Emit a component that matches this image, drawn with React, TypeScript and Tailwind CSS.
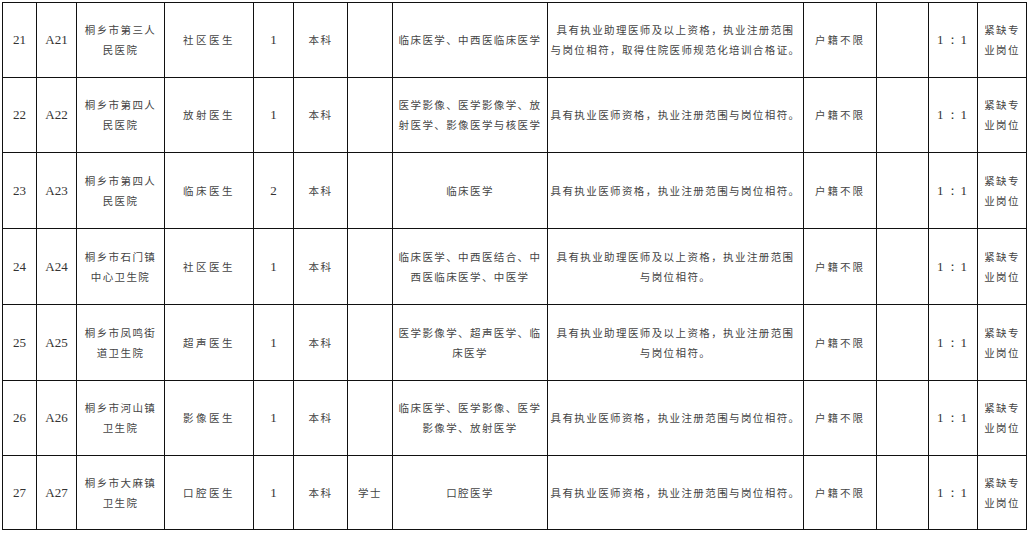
type Row = {
  no: string;
  code: string;
  unit: string[];
  post: string;
  count: string;
  edu: string;
  degree: string;
  major: string[];
  req: string[];
  h: string;
};

const rows: Row[] = [
  {
    no: "21",
    code: "A21",
    unit: ["桐乡市第三人", "民医院"],
    post: "社区医生",
    count: "1",
    edu: "本科",
    degree: "",
    major: ["临床医学、中西医临床医学"],
    req: ["具有执业助理医师及以上资格，执业注册范围", "与岗位相符，取得住院医师规范化培训合格证。"],
    h: "h-[75px]",
  },
  {
    no: "22",
    code: "A22",
    unit: ["桐乡市第四人", "民医院"],
    post: "放射医生",
    count: "1",
    edu: "本科",
    degree: "",
    major: ["医学影像、医学影像学、放", "射医学、影像医学与核医学"],
    req: ["具有执业医师资格，执业注册范围与岗位相符。"],
    h: "h-[75px]",
  },
  {
    no: "23",
    code: "A23",
    unit: ["桐乡市第四人", "民医院"],
    post: "临床医生",
    count: "2",
    edu: "本科",
    degree: "",
    major: ["临床医学"],
    req: ["具有执业医师资格，执业注册范围与岗位相符。"],
    h: "h-[76px]",
  },
  {
    no: "24",
    code: "A24",
    unit: ["桐乡市石门镇", "中心卫生院"],
    post: "社区医生",
    count: "1",
    edu: "本科",
    degree: "",
    major: ["临床医学、中西医结合、中", "西医临床医学、中医学"],
    req: ["具有执业助理医师及以上资格，执业注册范围", "与岗位相符。"],
    h: "h-[76px]",
  },
  {
    no: "25",
    code: "A25",
    unit: ["桐乡市凤鸣街", "道卫生院"],
    post: "超声医生",
    count: "1",
    edu: "本科",
    degree: "",
    major: ["医学影像学、超声医学、临", "床医学"],
    req: ["具有执业助理医师及以上资格，执业注册范围", "与岗位相符。"],
    h: "h-[76px]",
  },
  {
    no: "26",
    code: "A26",
    unit: ["桐乡市河山镇", "卫生院"],
    post: "影像医生",
    count: "1",
    edu: "本科",
    degree: "",
    major: ["临床医学、医学影像、医学", "影像学、放射医学"],
    req: ["具有执业医师资格，执业注册范围与岗位相符。"],
    h: "h-[75px]",
  },
  {
    no: "27",
    code: "A27",
    unit: ["桐乡市大麻镇", "卫生院"],
    post: "口腔医生",
    count: "1",
    edu: "本科",
    degree: "学士",
    major: ["口腔医学"],
    req: ["具有执业医师资格，执业注册范围与岗位相符。"],
    h: "h-[74px]",
  },
];

const cell = "border-[1.5px] border-[#111] text-center align-middle p-0";
const cjk = "font-['Noto_Sans_CJK_SC',sans-serif] text-[10.5px] tracking-[1.4px] leading-[20px] text-[#444]";
const num = "font-['Liberation_Serif',serif] text-[13px] text-[#333]";

function Lines({ lines }: { lines: string[] }) {
  return (
    <>
      {lines.map((l, i) => (
        <div key={i} className="whitespace-nowrap">
          {l}
        </div>
      ))}
    </>
  );
}

export default function App() {
  return (
    <div className="w-[1032px] h-[534px] bg-white overflow-hidden pt-[2px] pl-[2px]">
      <table className="table-fixed border-collapse w-[1024px]">
        <colgroup>
          <col className="w-[34px]" />
          <col className="w-[40px]" />
          <col className="w-[88px]" />
          <col className="w-[89px]" />
          <col className="w-[40px]" />
          <col className="w-[54px]" />
          <col className="w-[45px]" />
          <col className="w-[155px]" />
          <col className="w-[256px]" />
          <col className="w-[73px]" />
          <col className="w-[52px]" />
          <col className="w-[49px]" />
          <col className="w-[49px]" />
        </colgroup>
        <tbody>
          {rows.map((r) => (
            <tr key={r.no} className={r.h}>
              <td className={`${cell} ${num}`}>{r.no}</td>
              <td className={`${cell} ${num} text-[12px]`}>{r.code}</td>
              <td className={`${cell} ${cjk}`}>
                <Lines lines={r.unit} />
              </td>
              <td className={`${cell} ${cjk} tracking-[2.5px]`}>{r.post}</td>
              <td className={`${cell} ${num}`}>{r.count}</td>
              <td className={`${cell} ${cjk}`}>{r.edu}</td>
              <td className={`${cell} ${cjk}`}>{r.degree}</td>
              <td className={`${cell} ${cjk}`}>
                <Lines lines={r.major} />
              </td>
              <td className={`${cell} ${cjk}`}>
                <Lines lines={r.req} />
              </td>
              <td className={`${cell} ${cjk} tracking-[2px]`}>户籍不限</td>
              <td className={`${cell}`}></td>
              <td className={`${cell} ${num} text-[12px] tracking-[2px]`}>1：1</td>
              <td className={`${cell} ${cjk}`}>
                <Lines lines={["紧缺专", "业岗位"]} />
              </td>
            </tr>
          ))}
        </tbody>
      </table>
    </div>
  );
}
